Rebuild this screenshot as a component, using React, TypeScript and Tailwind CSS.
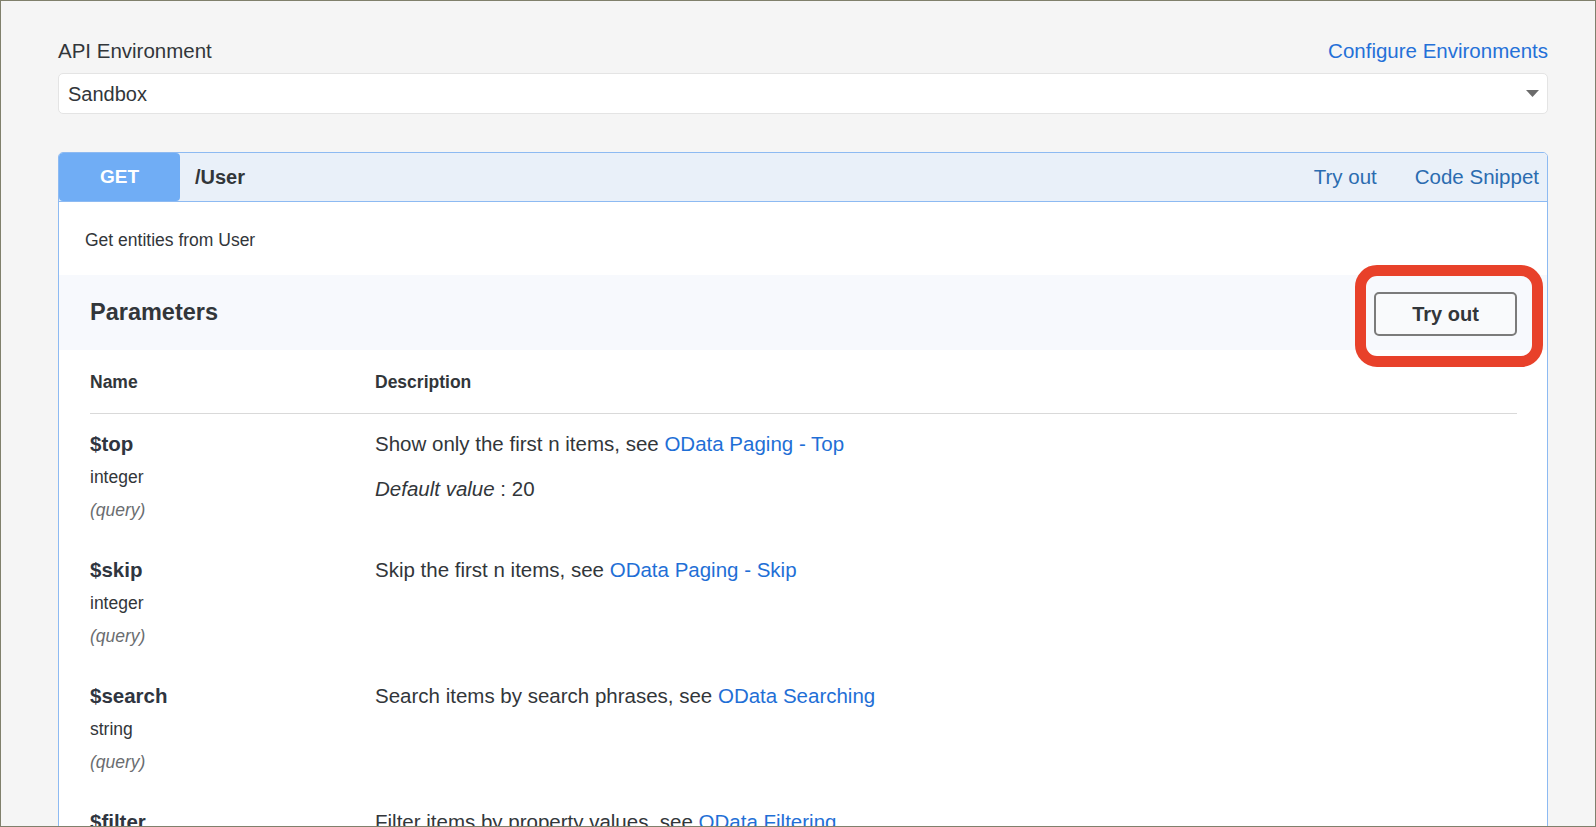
type Param = {
  name: string;
  type: string;
  text: string;
  link: string;
  defaultValue?: string;
};

const params: Param[] = [
  { name: '$top', type: 'integer', text: 'Show only the first n items, see ', link: 'OData Paging - Top', defaultValue: '20' },
  { name: '$skip', type: 'integer', text: 'Skip the first n items, see ', link: 'OData Paging - Skip' },
  { name: '$search', type: 'string', text: 'Search items by search phrases, see ', link: 'OData Searching' },
  { name: '$filter', type: 'string', text: 'Filter items by property values, see ', link: 'OData Filtering' },
];

function ParamRow({ p }: { p: Param }) {
  return (
    <div className="grid grid-cols-[285px_1fr] pt-[14px] pb-[13px]">
      <div>
        <div className="flex h-[33px] items-center text-[20.5px] font-bold text-[#2f3540]">{p.name}</div>
        <div className="flex h-[33px] items-center text-[17.5px]">{p.type}</div>
        <div className="flex h-[33px] items-center text-[17.5px] italic text-[#6a6d70]">(query)</div>
      </div>
      <div>
        <div className="flex h-[33px] items-center text-[20.5px]">
          <span className="whitespace-pre">{p.text}</span>
          <a className="text-[#1f6fd6]">{p.link}</a>
        </div>
        {p.defaultValue ? (
          <div className="mt-[12px] flex h-[33px] items-center text-[20.5px]">
            <i>Default value</i>
            <span className="whitespace-pre"> : {p.defaultValue}</span>
          </div>
        ) : null}
      </div>
    </div>
  );
}

export default function App() {
  return (
    <div className="h-[827px] w-full overflow-hidden border border-[#80806c] bg-[#f5f5f5] font-['Liberation_Sans',Arial,sans-serif] text-[#32363a]">
      <div className="pl-[57px] pr-[47px] pt-[38px]">
        <div className="flex h-[24px] items-center justify-between text-[20.5px]">
          <span>API Environment</span>
          <a className="text-[#2470d8]">Configure Environments</a>
        </div>

        <div className="mt-[10px] flex h-[41px] items-center justify-between rounded-[5px] border border-[#e4e4e4] bg-white pl-[9px] pr-[8px]">
          <span className="text-[20px]">Sandbox</span>
          <svg width="13" height="7" viewBox="0 0 13 7">
            <polygon points="0,0 13,0 6.5,7" fill="#6b6b6b" />
          </svg>
        </div>

        <div className="mt-[38px] rounded-[5px] border border-[#8dbaf2] bg-white">
          <div className="flex h-[49px] items-center rounded-t-[4px] border-b border-[#8dbaf2] bg-[#e9f0f9]">
            <div className="flex h-full w-[121px] items-center justify-center rounded-[4px] bg-[#70adf5] text-[19px] font-bold text-white">
              GET
            </div>
            <span className="ml-[15px] text-[20px] font-bold">/User</span>
            <div className="ml-auto flex gap-[38px] pr-[8px] text-[20.5px] text-[#2b6cb0]">
              <a>Try out</a>
              <a>Code Snippet</a>
            </div>
          </div>

          <div className="pt-[27px]">
            <p className="px-[26px] text-[17.5px] leading-[22px]">Get entities from User</p>

            <div className="mt-[24px] flex h-[75px] items-center justify-between bg-[#f7f9fd] pl-[31px] pr-[30px]">
              <h3 className="text-[23.5px] font-bold">Parameters</h3>
              <div className="relative mt-[3px]">
                <button className="h-[44px] w-[143px] rounded-[5px] border-2 border-[#7b7b7b] bg-[#f9fafc] text-[20px] font-bold text-[#32363a]">
                  Try out
                </button>
                <span className="pointer-events-none absolute -top-[27px] -right-[26px] -bottom-[31px] -left-[19px] rounded-[22px] border-[11px] border-[#e8412a]" />
              </div>
            </div>

            <div className="pl-[31px] pr-[30px]">
              <div className="grid grid-cols-[285px_1fr] border-b border-[#d9d9d9] pt-[21px] pb-[20px] text-[17.5px] leading-[22px] font-bold">
                <span>Name</span>
                <span>Description</span>
              </div>
              {params.map((p) => (
                <ParamRow key={p.name} p={p} />
              ))}
            </div>
          </div>
        </div>
      </div>
    </div>
  );
}
